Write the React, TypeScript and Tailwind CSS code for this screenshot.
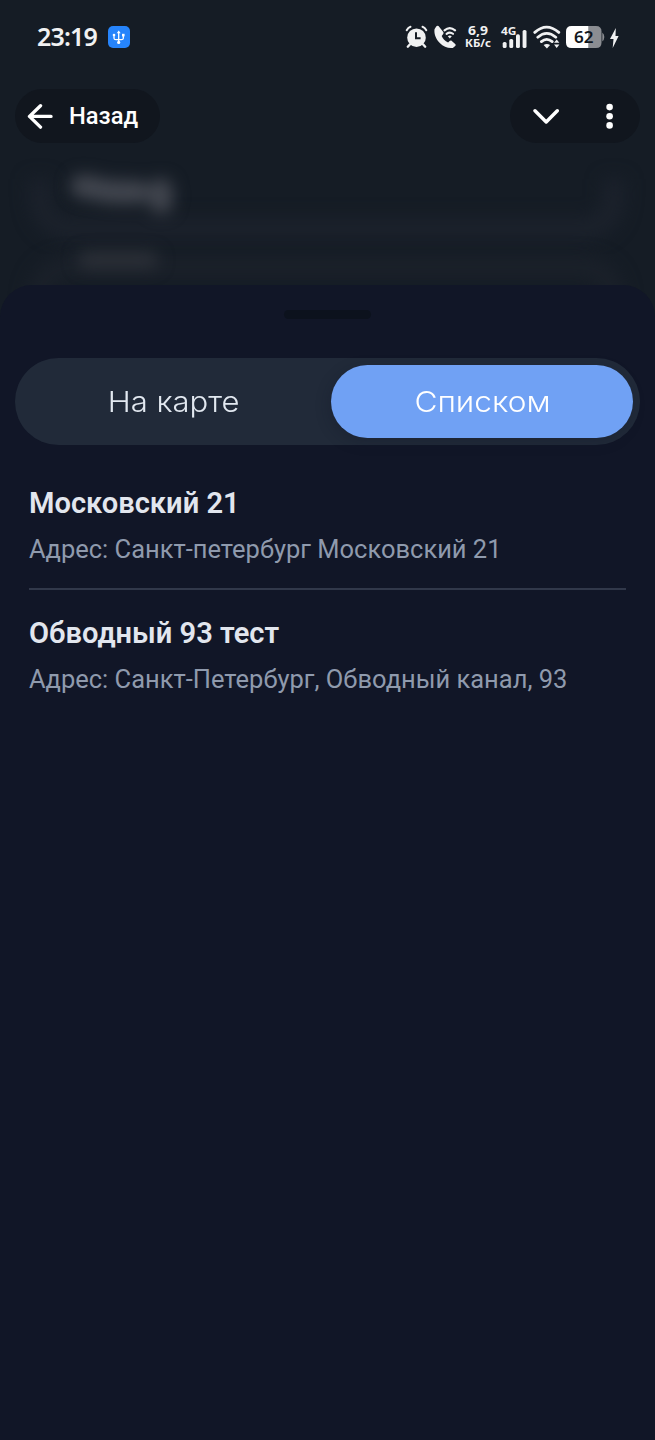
import React from "react";

function StatusBar() {
  return (
    <header className="flex h-[73px] w-full shrink-0 items-center pl-[37px] pr-[36px] text-[#f0f1f2]">
      <span className="mb-[2px] w-[71px] whitespace-nowrap font-['Noto_Sans',sans-serif] text-[25px] font-semibold leading-[30px] tracking-[-0.8px]">23:19</span>
      <svg className="h-[22px] w-[22px]" viewBox="0 0 22 22" fill="none">
        <rect width="22" height="22" rx="5" fill="#2684fb" />
        <path d="M10.700 6v11M6 9v3.200q0 1.500 2 1.500h5.300q2 0 2-1.500V9" stroke="#fff" strokeWidth="1.3" />
        <path d="M10.700 4.400 12.700 7.300H8.700z" fill="#fff" />
        <circle cx="6" cy="9" r="1.3" fill="#fff" />
        <rect x="14" y="7.8" width="2.6" height="2.6" fill="#fff" />
        <circle cx="10.7" cy="16.4" r="1.6" fill="#fff" />
      </svg>
      <div className="ml-auto flex items-center">
        <svg className="mr-[5px] h-6 w-[23px]" viewBox="0 0 23 24" fill="none">
          <circle cx="11.5" cy="12.7" r="9.3" fill="#f0f1f2" />
          <path d="M1.700 5.200q1.400-2.600 3.800-3.400M21.300 5.200q-1.400-2.600-3.800-3.400" stroke="#f0f1f2" strokeWidth="2" strokeLinecap="round" />
          <path d="m4.800 19.500-2 2.200m15.400-2.200 2 2.200" stroke="#f0f1f2" strokeWidth="2.4" strokeLinecap="round" />
          <path d="M11 7.300v6h4.600" stroke="#151c25" strokeWidth="2" />
        </svg>
        <svg className="h-6 w-6" viewBox="0 0 24 24" fill="none">
          <path d="M3.200 1.600 1.500 4.300C.9 9.200 3 14.200 6.800 18c3.700 3.700 8.400 5.500 13 4.900l2.400-1.900c.7-.6.6-1.500 0-2l-3.400-3.100c-.7-.6-1.500-.6-2.200.1l-1.500 1.500c-3.200-1.500-5.200-3.600-6.400-6.500l1.500-1.900c.5-.6.5-1.300.1-2L6.300 1.900c-.8-1.300-2.300-1.400-3.100-.3Z" fill="#f0f1f2" />
          <path d="M11.500 5.400q5.200-4.500 10.600 0M13.600 8.800q3.300-2.500 6.400 0" stroke="#f0f1f2" strokeWidth="2.1" strokeLinecap="round" />
          <path d="m14.800 11.200 2 2.400 2-2.400q-2-1.500-4 0Z" fill="#f0f1f2" />
        </svg>
        <svg className="ml-[7px] h-6 w-7 overflow-visible font-['Noto_Sans',sans-serif] font-bold" viewBox="0 0 28 24" fill="currentColor">
          <text x="4" y="10" fontSize="13" textLength="20" lengthAdjust="spacingAndGlyphs">6,9</text>
          <text x="1" y="22" fontSize="10.5" textLength="26" lengthAdjust="spacingAndGlyphs">КБ/с</text>
        </svg>
        <svg className="ml-[10px] h-6 w-[26px] overflow-visible" viewBox="0 0 26 24" fill="#f0f1f2">
          <text x="-1" y="9.5" fontFamily="Noto Sans, sans-serif" fontSize="11" fontWeight="700" textLength="15.5" lengthAdjust="spacingAndGlyphs">4G</text>
          <rect x="0.7" y="17" width="3.9" height="6" rx="1.6" />
          <rect x="7.3" y="14" width="3.9" height="9" rx="1.6" />
          <rect x="14" y="9.3" width="3.9" height="13.7" rx="1.6" />
          <rect x="20.6" y="5" width="3.9" height="18" rx="1.6" />
        </svg>
        <svg className="ml-[5px] h-6 w-[28px]" viewBox="0 0 28 24" fill="none">
          <path d="M1.800 7.400Q13.500-3.200 25.800 7.400M4.800 12.200q8.900-7.700 18 0M8.400 16.600q5.300-4.500 10.800 0" stroke="#f0f1f2" strokeWidth="2.8" strokeLinecap="round" />
          <path d="M10.600 20.100q3.200-2.100 6.500 0l-3.200 3.500Z" fill="#f0f1f2" />
          <path d="m23.700 14.500 2.700 3.200H21Zm0 8.500L21 19.400h5.400Z" fill="#f0f1f2" />
        </svg>
        <svg className="ml-[5px] h-6 w-[39px]" viewBox="0 0 39 24">
          <path d="M22.500 1H30q5.500 0 5.500 5.500v11Q35.500 23 30 23h-7.500Z" fill="#8b8d92" />
          <path d="M36.300 7.500q2 1.700 2 4.500t-2 4.500Z" fill="#8b8d92" />
          <path d="M22.500 1H5.500Q0 1 0 6.500v11Q0 23 5.500 23h17Z" fill="#fff" />
          <text x="8" y="18" fill="#11161d" fontFamily="Noto Sans, sans-serif" fontSize="16.5" fontWeight="600" textLength="19.5" lengthAdjust="spacingAndGlyphs">62</text>
        </svg>
        <svg className="ml-[5px] mt-[2px] h-6 w-[9px]" viewBox="0 0 9 24" fill="#f0f1f2">
          <path d="M5.800 2 0 13h3.500L2.700 22 8.600 10H5.500Z" />
        </svg>
      </div>
    </header>
  );
}

function NavBar() {
  return (
    <nav className="z-10 mt-4 flex h-[54px] shrink-0 items-center justify-between px-[15px] text-white">
      <button className="flex h-[54px] w-[145px] items-center rounded-full bg-[#11161e] pl-[12px]">
        <svg className="h-[26px] w-[28px]" viewBox="0 0 28 26" fill="none" stroke="currentColor" strokeWidth="3.4" strokeLinecap="round" strokeLinejoin="round">
          <path d="M24 13.400H2.500M13.500 2.700 2.500 13.400l11 10.700" />
        </svg>
        <span className="ml-[14px] whitespace-nowrap font-[Roboto,sans-serif] text-[23.7px] font-medium leading-[30px]">Назад</span>
      </button>
      <div className="flex h-[54px] w-[130px] items-center rounded-full bg-[#11161e] pl-[23px]">
        <svg className="h-[16px] w-[26px]" viewBox="0 0 26 16" fill="none" stroke="currentColor" strokeWidth="3.4" strokeLinecap="round" strokeLinejoin="round">
          <path d="M2 2.700 13.200 14 24.300 2.700" />
        </svg>
        <svg className="ml-[47px] h-[26px] w-[8px]" viewBox="0 0 8 26" fill="currentColor">
          <circle cx="3.6" cy="4.1" r="3.3" />
          <circle cx="3.6" cy="13.3" r="3.3" />
          <circle cx="3.6" cy="22.4" r="3.3" />
        </svg>
      </div>
    </nav>
  );
}

function Backdrop() {
  return (
    <svg className="h-[178px] w-full shrink-0" viewBox="0 0 655 178" fill="none">
      <defs>
        <filter id="soft" x="-20%" y="-50%" width="140%" height="200%" colorInterpolationFilters="sRGB">
          <feGaussianBlur stdDeviation="9" />
        </filter>
        <filter id="glow" x="-40%" y="-80%" width="180%" height="260%" colorInterpolationFilters="sRGB">
          <feGaussianBlur stdDeviation="8" />
        </filter>
      </defs>
      <path d="M40 36V52Q40 86 74 86H580Q614 86 614 52V36" stroke="#1c222c" strokeWidth="20" filter="url(#soft)" />
      <path d="M38 190V160Q38 124 72 124H580Q614 124 614 160V190" stroke="#1b212a" strokeWidth="20" filter="url(#soft)" />
      <g filter="url(#glow)">
        <path d="M82 43 112 49H138M161 47V59" stroke="#42464f" strokeWidth="23" strokeLinecap="round" />
        <path d="M86 117H150" stroke="#2c3038" strokeWidth="17" strokeLinecap="round" />
      </g>
    </svg>
  );
}

function PlaceItem({ name, address }: { name: string; address: string }) {
  return (
    <li className="flex flex-col whitespace-nowrap">
      <h2 className="text-[29.1px] font-semibold leading-[44px] text-[#e2e6ee]">{name}</h2>
      <p className="mt-[2px] text-[25.47px] leading-[44px] text-[#8f9aad]">{address}</p>
    </li>
  );
}

export default function App() {
  return (
    <main className="flex h-[1440px] w-[655px] flex-col overflow-hidden bg-[#151c25]">
      <StatusBar />
      <NavBar />
      <Backdrop />
      <section className="z-10 -mt-[36px] flex grow flex-col items-center rounded-t-[32px] bg-[#111627] px-[15px] font-[Roboto,sans-serif]">
        <div className="mt-[25px] h-[9px] w-[87px] rounded-full bg-[#0c121d]" />
        <div className="mt-[39px] flex h-[87px] w-[625px] rounded-full bg-[#212a39] p-[7px] font-[Inter,sans-serif] text-[29px] font-light text-[#e2e8f0]">
          <button className="flex h-[73px] w-[309px] items-center justify-center pr-[6px]">
            <span className="scale-x-[1.07] whitespace-nowrap">На карте</span>
          </button>
          <button className="flex h-[73px] w-[302px] items-center justify-center rounded-full bg-[#70a1f4] text-white shadow-[-2px_4px_14px_rgba(17,22,39,0.3)]">
            <span className="scale-x-[1.09] whitespace-nowrap">Списком</span>
          </button>
        </div>
        <ul className="mt-[36px] flex w-[597px] flex-col">
          <PlaceItem name="Московский 21" address="Адрес: Санкт-петербург Московский 21" />
          <li className="mb-[21px] mt-[17px] h-[2px] bg-[#31384a]" />
          <PlaceItem name="Обводный 93 тест" address="Адрес: Санкт-Петербург, Обводный канал, 93" />
        </ul>
      </section>
    </main>
  );
}
